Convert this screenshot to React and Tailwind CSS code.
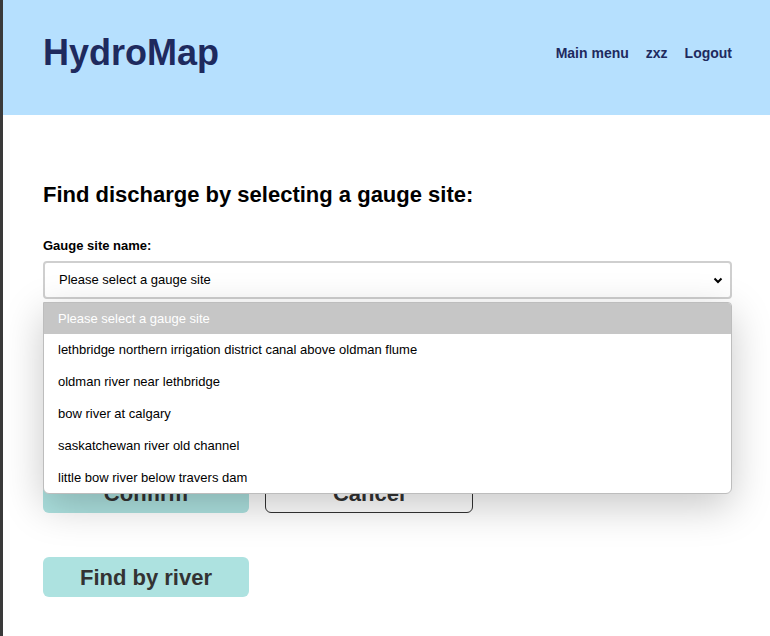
const sites = [
  'lethbridge northern irrigation district canal above oldman flume',
  'oldman river near lethbridge',
  'bow river at calgary',
  'saskatchewan river old channel',
  'little bow river below travers dam',
];

export default function App() {
  return (
    <div className="flex min-h-[636px] bg-white font-['Liberation_Sans',Arial,sans-serif]">
      <div className="w-[3px] shrink-0 bg-[#3a3a3a]" />
      <div className="flex-1">
        {/* Header */}
        <header className="flex h-[115px] items-center justify-between bg-[#b6e0fe] pb-[9px] pl-[40px] pr-[38px]">
          <h1 className="text-[36px] font-bold leading-none text-[#1e2a5e]">HydroMap</h1>
          <nav className="flex items-center gap-[17px] text-[14px] font-bold text-[#1e2a5e]">
            <a>Main menu</a>
            <a>zxz</a>
            <a>Logout</a>
          </nav>
        </header>

        {/* Main form */}
        <main className="pl-[40px] pr-[38px] pt-[68px]">
          <h2 className="text-[22px] font-bold leading-[24px] text-black">
            Find discharge by selecting a gauge site:
          </h2>
          <div className="relative mt-[31px]">
            <label className="block text-[13px] font-bold leading-[16px] text-black">Gauge site name:</label>
            <div className="mt-[7px] flex h-[38px] items-center justify-between rounded-[4px] border-2 border-[#cfcfcf] pl-[14px] pr-[6px] text-[13px] text-black">
              <span>Please select a gauge site</span>
              <svg width="12" height="12" viewBox="0 0 12 12">
                <path d="M2.5 4.5 L6 8 L9.5 4.5" fill="none" stroke="#000" strokeWidth="2" />
              </svg>
            </div>

            <div className="mt-[84px]">
              <label className="block text-[13px] font-bold leading-[16px] text-black">Date:</label>
              <div className="mt-[7px] h-[40px] rounded-[4px] border-2 border-[#cfcfcf]" />
            </div>

            <div className="mt-[27px] flex gap-[16px]">
              <button className="h-[40px] w-[206px] rounded-[6px] bg-[#ade2e0] text-[22px] font-bold text-[#333]">
                Confirm
              </button>
              <button className="h-[40px] w-[208px] rounded-[6px] border border-[#333] bg-white text-[22px] font-bold text-[#333]">
                Cancel
              </button>
            </div>

            {/* Open dropdown list */}
            <ul className="absolute left-0 right-0 top-[64px] overflow-hidden rounded-b-[6px] rounded-tr-[4px] border border-[#bdbdbd] bg-white text-[13px] shadow-[0_12px_40px_rgba(0,0,0,0.22)]">
              <li className="flex h-[31px] items-center bg-[#c6c6c6] px-[14px] text-white">Please select a gauge site</li>
              {sites.map((s) => (
                <li key={s} className="flex h-[32px] items-center px-[14px] text-black last:h-[31px]">
                  {s}
                </li>
              ))}
            </ul>
          </div>

          <button className="mt-[44px] h-[40px] w-[206px] rounded-[6px] bg-[#ade2e0] text-[22px] font-bold text-[#333]">
            Find by river
          </button>
        </main>
      </div>
    </div>
  );
}
